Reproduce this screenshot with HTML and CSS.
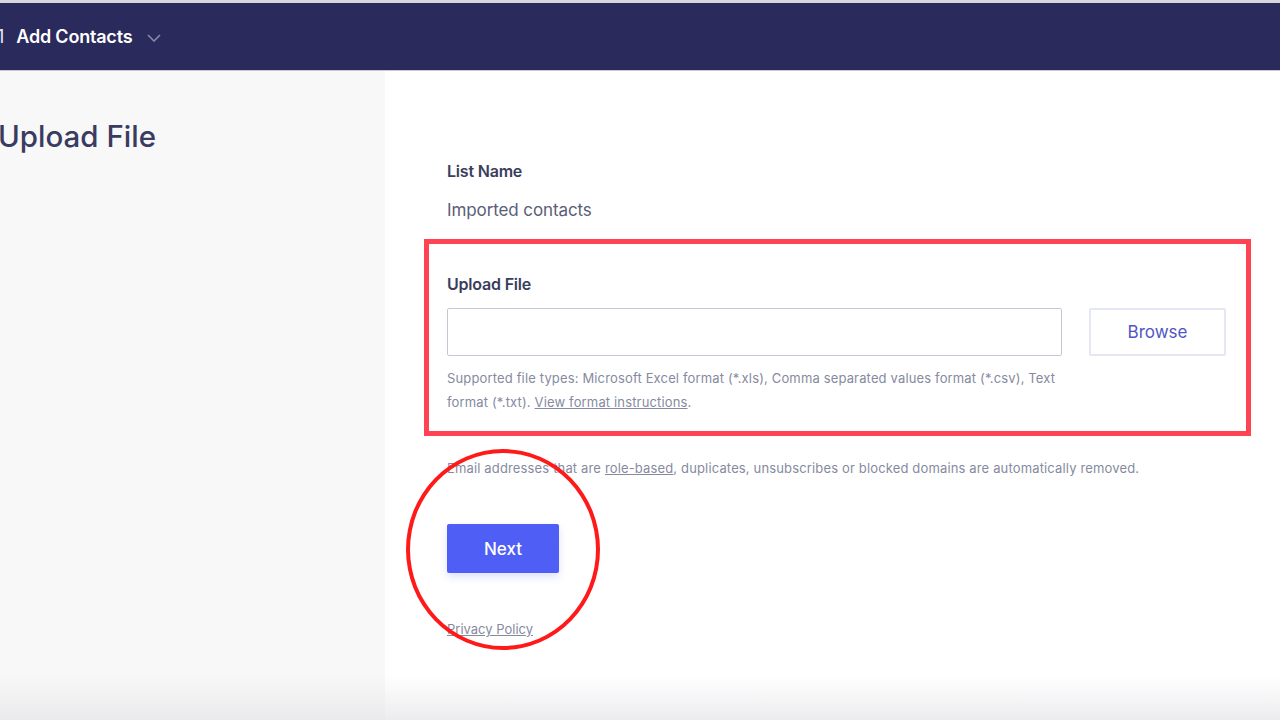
FILE: index.html
```html
<!DOCTYPE html>
<html>
<head>
<meta charset="utf-8">
<link rel="stylesheet" href="styles.css">
</head>
<body>
<div class="page">
  <header class="topbar">
    <div class="crumb"><span class="step">1</span><span class="crumb-title">Add Contacts</span>
      <svg class="chev" width="14" height="8" viewBox="0 0 14 8"><path d="M1 1 L7 7 L13 1" fill="none" stroke="#8a8aa8" stroke-width="1.6"/></svg>
    </div>
  </header>
  <div class="main">
    <aside class="sidebar">
      <h1 class="side-title">Upload File</h1>
    </aside>
    <section class="content">
      <div class="field">
        <div class="label">List Name</div>
        <div class="value">Imported contacts</div>
      </div>
      <div class="upload-box">
        <div class="label">Upload File</div>
        <div class="upload-row">
          <div class="file-input"></div>
          <button class="browse">Browse</button>
        </div>
        <p class="help">Supported file types: Microsoft Excel format (*.xls), Comma separated values format (*.csv), Text format (*.txt). <a href="#">View format instructions</a>.</p>
      </div>
      <p class="note">Email addresses that are <a href="#">role-based</a>, duplicates, unsubscribes or blocked domains are automatically removed.</p>
      <div class="next-wrap">
        <button class="next">Next</button>
        <div class="circle"></div>
      </div>
      <a class="privacy" href="#">Privacy Policy</a>
    </section>
  </div>
  <div class="fade"></div>
</div>
</body>
</html>
```
FILE: styles.css
```css
* { box-sizing: border-box; }
html, body { margin: 0; padding: 0; }
body {
  font-family: "Inter", "Liberation Sans", sans-serif;
  background: #ffffff;
  color: #3a3d5c;
  width: 1280px;
  height: 720px;
  overflow: hidden;
}
.page { position: relative; width: 1280px; height: 720px; display: flex; flex-direction: column; }
.topbar {
  height: 71px;
  background: #2b2a5c;
  border-top: 3px solid #d6d6de;
  border-bottom: 1px solid #c9c9d6;
  display: flex;
  align-items: center;
  flex-shrink: 0;
}
.crumb { display: flex; align-items: center; color: #fff; margin-left: -3px; }
.step { font-size: 18px; font-weight: 400; margin-right: 12px; color: #e8e8f0; }
.crumb-title { font-size: 18px; font-weight: 600; letter-spacing: -0.2px; }
.chev { margin-left: 15px; margin-top: 2px; }
.main { flex: 1; display: flex; }
.sidebar { width: 385px; background: #f8f8f8; flex-shrink: 0; }
.side-title {
  margin: 45px 0 0 -2px;
  font-size: 29.5px;
  font-weight: 500;
  color: #393c60;
  letter-spacing: 0;
  line-height: 40px;
}
.content { flex: 1; padding: 88px 0 0 62px; }
.label { font-size: 16px; font-weight: 600; color: #3a3d5c; line-height: 24px; letter-spacing: -0.2px; }
.value { font-size: 17px; color: #5a5d78; margin-top: 15px; line-height: 24px; letter-spacing: -0.1px; }
.upload-box {
  margin: 17px 0 0 -23px;
  width: 827px;
  height: 197px;
  border: 5px solid #ff4352;
  padding: 28px 20px 0 18px;
}
.upload-row { display: flex; gap: 27px; margin-top: 12px; }
.file-input { width: 615px; height: 48px; border: 1px solid #c6c7d2; border-radius: 2px; background: #fff; }
.browse {
  width: 137px; height: 48px;
  border: 2px solid #e6e7f5;
  background: #fff;
  color: #5056c4;
  font-family: inherit;
  font-size: 17px;
  border-radius: 2px;
}
.help {
  margin: 10px 0 0 0;
  width: 615px;
  font-size: 13px;
  line-height: 24px;
  color: #868aa0;
  letter-spacing: 0.15px;
}
.help a, .note a, .privacy { color: #868aa0; text-decoration: underline; }
.note { margin: 20px 0 0 0; font-size: 13px; line-height: 24px; color: #868aa0; letter-spacing: 0.15px; }
.next-wrap { position: relative; margin-top: 44px; width: 112px; }
.next {
  width: 112px; height: 49px;
  background: #4f5ef5;
  color: #fff;
  border: none;
  border-radius: 2px;
  font-family: inherit;
  font-size: 17px;
  font-weight: 500;
  box-shadow: 0 4px 8px rgba(80, 94, 245, 0.18);
}
.circle {
  position: absolute;
  left: -41px;
  top: -75px;
  width: 194px;
  height: 201px;
  border: 4px solid #ff1a1a;
  border-radius: 50%;
  pointer-events: none;
}
.privacy { display: inline-block; margin-top: 44px; font-size: 13px; line-height: 24px; letter-spacing: 0; }
.fade {
  position: absolute; left: 0; right: 0; bottom: 0; height: 45px;
  background: linear-gradient(to bottom, rgba(228,228,232,0), rgba(228,228,232,0.7));
  pointer-events: none;
}
```
